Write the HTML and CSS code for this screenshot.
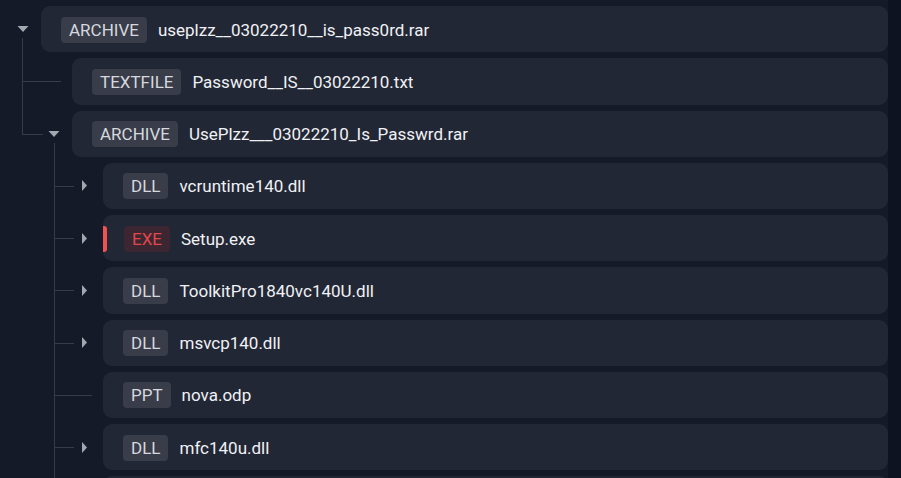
FILE: index.html
```html
<!DOCTYPE html>
<html lang="en">
<head>
<meta charset="utf-8">
<title>Archive tree</title>
<link rel="stylesheet" href="styles.css">
</head>
<body>
<div class="page">
  <div class="tree">
    <div class="row">
      <div class="t t-down-root"><svg class="caret-down" width="12" height="6" viewBox="0 0 12 6"><polygon points="0.5,0 11.5,0 6,6"/></svg></div>
      <div class="card"><span class="badge">ARCHIVE</span><span class="name">useplzz__03022210__is_pass0rd.rar</span></div>
    </div>
    <div class="row">
      <div class="g c0 g-tee"></div>
      <div class="t t-leaf"></div>
      <div class="card"><span class="badge">TEXTFILE</span><span class="name">Password__IS__03022210.txt</span></div>
    </div>
    <div class="row">
      <div class="g c0 g-elbow"></div>
      <div class="t t-down"><svg class="caret-down" width="12" height="6" viewBox="0 0 12 6"><polygon points="0.5,0 11.5,0 6,6"/></svg></div>
      <div class="card"><span class="badge">ARCHIVE</span><span class="name">UsePlzz___03022210_Is_Passwrd.rar</span></div>
    </div>
    <div class="row">
      <div class="g"></div>
      <div class="g c1 g-tee"></div>
      <div class="t t-right"><svg class="caret-right" width="5" height="11" viewBox="0 0 5 11"><polygon points="0,0 5,5.5 0,11"/></svg></div>
      <div class="card"><span class="badge">DLL</span><span class="name">vcruntime140.dll</span></div>
    </div>
    <div class="row">
      <div class="g"></div>
      <div class="g c1 g-tee"></div>
      <div class="t t-right"><svg class="caret-right" width="5" height="11" viewBox="0 0 5 11"><polygon points="0,0 5,5.5 0,11"/></svg></div>
      <div class="card card-alert"><span class="flag"></span><span class="badge badge-exe">EXE</span><span class="name">Setup.exe</span></div>
    </div>
    <div class="row">
      <div class="g"></div>
      <div class="g c1 g-tee"></div>
      <div class="t t-right"><svg class="caret-right" width="5" height="11" viewBox="0 0 5 11"><polygon points="0,0 5,5.5 0,11"/></svg></div>
      <div class="card"><span class="badge">DLL</span><span class="name">ToolkitPro1840vc140U.dll</span></div>
    </div>
    <div class="row">
      <div class="g"></div>
      <div class="g c1 g-tee"></div>
      <div class="t t-right"><svg class="caret-right" width="5" height="11" viewBox="0 0 5 11"><polygon points="0,0 5,5.5 0,11"/></svg></div>
      <div class="card"><span class="badge">DLL</span><span class="name">msvcp140.dll</span></div>
    </div>
    <div class="row">
      <div class="g"></div>
      <div class="g c1 g-tee"></div>
      <div class="t t-leaf"></div>
      <div class="card"><span class="badge">PPT</span><span class="name">nova.odp</span></div>
    </div>
    <div class="row">
      <div class="g"></div>
      <div class="g c1 g-tee"></div>
      <div class="t t-right"><svg class="caret-right" width="5" height="11" viewBox="0 0 5 11"><polygon points="0,0 5,5.5 0,11"/></svg></div>
      <div class="card"><span class="badge">DLL</span><span class="name">mfc140u.dll</span></div>
    </div>
    <div class="row">
      <div class="g"></div>
      <div class="g c1 g-tee"></div>
      <div class="t t-right"></div>
      <div class="card"></div>
    </div>
  </div>
  <div class="track"></div>
</div>
</body>
</html>
```
FILE: styles.css
```css
* { box-sizing: border-box; }
html, body {
  margin: 0;
  padding: 0;
  height: 100%;
  overflow: hidden;
  background: #0e1322;
}
body {
  font-family: Roboto, "Liberation Sans", sans-serif;
  font-size: 17px;
  color: #eef0f4;
}
.page {
  display: flex;
  height: 478px;
}
.tree {
  flex: 1;
  background: #151a28;
  padding: 6px 0 0 10px;
  overflow: hidden;
}
.track {
  width: 13px;
  flex: none;
  background: #0e1322;
}
.row {
  display: flex;
  align-items: stretch;
}
.g, .t {
  width: 31px;
  flex: none;
}
.g { --x: 12px; }
.g.c1 { --x: 13px; }
.g-tee {
  background:
    linear-gradient(#363b48, #363b48) var(--x) 0 / 1px 100% no-repeat,
    linear-gradient(#363b48, #363b48) var(--x) 23px / 100% 1px no-repeat;
}
.g-elbow {
  background:
    linear-gradient(#363b48, #363b48) var(--x) 0 / 1px 24px no-repeat,
    linear-gradient(#363b48, #363b48) var(--x) 23px / 100% 1px no-repeat;
}
.t {
  display: flex;
  align-items: flex-start;
}
.t svg { fill: #a3a7b0; display: block; }
.t-down-root {
  padding: 20px 0 0 7px;
  background: linear-gradient(#363b48, #363b48) 12px 32px / 1px 100% no-repeat;
}
.t-down {
  padding: 20px 0 0 7px;
  background:
    linear-gradient(#363b48, #363b48) 13px 32px / 1px 100% no-repeat,
    linear-gradient(#363b48, #363b48) 0 23px / 2px 1px no-repeat;
}
.t-right {
  padding: 17.5px 0 0 10px;
  background: linear-gradient(#363b48, #363b48) 0 23px / 2px 1px no-repeat;
}
.t-leaf {
  background: linear-gradient(#363b48, #363b48) 0 23px / 20px 1px no-repeat;
}
.card {
  flex: 1;
  height: 46.25px;
  margin-bottom: 6px;
  background: #222735;
  border-radius: 9px;
  display: flex;
  align-items: center;
  padding: 1px 0 0 20px;
  white-space: nowrap;
}
.card-alert { padding-left: 0; }
.flag {
  width: 4px;
  height: 26px;
  background: #f0534f;
  border-radius: 0 3px 3px 0;
  margin-right: 17px;
  flex: none;
}
.badge {
  height: 26px;
  line-height: 26px;
  padding: 0 8px;
  border-radius: 4px;
  background: #393d4a;
  color: #d6d8de;
  flex: none;
}
.badge-exe {
  background: #3b2631;
  color: #e0484d;
}
.name {
  margin-left: 11px;
  color: #f0f1f4;
}
```
